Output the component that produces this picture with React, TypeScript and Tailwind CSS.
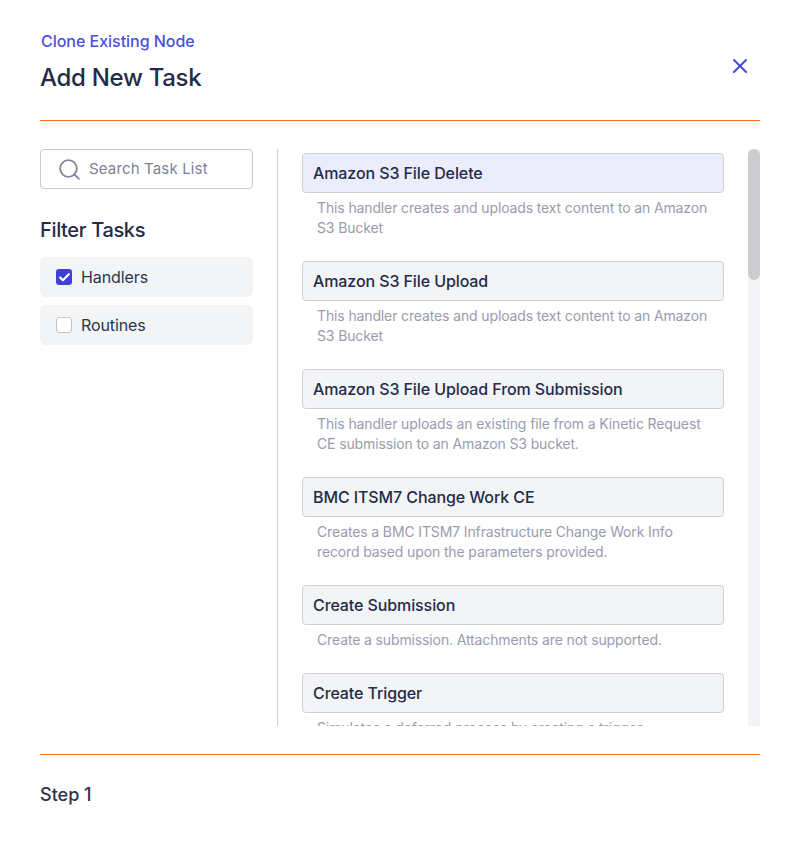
import React, { useState } from 'react';
import { Search, X, Check } from 'lucide-react';

const tasks = [
  { name: 'Amazon S3 File Delete', desc: 'This handler creates and uploads text content to an Amazon S3 Bucket' },
  { name: 'Amazon S3 File Upload', desc: 'This handler creates and uploads text content to an Amazon S3 Bucket' },
  { name: 'Amazon S3 File Upload From Submission', desc: 'This handler uploads an existing file from a Kinetic Request CE submission to an Amazon S3 bucket.' },
  { name: 'BMC ITSM7 Change Work CE', desc: 'Creates a BMC ITSM7 Infrastructure Change Work Info record based upon the parameters provided.' },
  { name: 'Create Submission', desc: 'Create a submission. Attachments are not supported.' },
  { name: 'Create Trigger', desc: 'Simulates a deferred process by creating a trigger.' },
];

const FilterRow = ({ label, checked, onToggle }: { label: string; checked: boolean; onToggle: () => void }) => (
  <label className="flex h-10 items-center gap-[9px] rounded-md bg-[#f3f4f6] px-4 cursor-pointer" onClick={onToggle}>
    <span className={checked
      ? 'flex h-4 w-4 items-center justify-center rounded-[3px] bg-[#3d41d4]'
      : 'flex h-4 w-4 items-center justify-center rounded-[3px] border border-[#c4c4c8] bg-white'}>
      {checked && <Check size={13} strokeWidth={4} className="text-white" />}
    </span>
    <span className="text-base leading-6 tracking-[-0.1px] text-[#2b3550]">{label}</span>
  </label>
);

export default function App() {
  const [handlers, setHandlers] = useState(true);
  const [routines, setRoutines] = useState(false);

  return (
    <div className="h-[845px] w-[800px] overflow-hidden rounded-lg bg-white px-10 font-['Inter',sans-serif]">
      <header className="flex h-[121px] items-start justify-between border-b border-[#f97028]">
        <div>
          <p className="mt-[31px] ml-px text-base font-medium leading-5 tracking-[-0.03px] text-[#4a50dc]">Clone Existing Node</p>
          <h1 className="mt-[11px] text-2xl font-medium leading-8 tracking-[-0.3px] text-[#232b48]">Add New Task</h1>
        </div>
        <button className="mt-[54px] mr-2 text-[#4348d8]">
          <X size={24} strokeWidth={2} />
        </button>
      </header>

      <div className="mt-7 flex h-[577px]">
        <aside className="w-[238px] shrink-0 border-r border-[#cfcfd3] pr-6">
          <div className="flex h-10 w-[213px] items-center gap-[7px] rounded border border-[#c9c9ce] pl-4 pr-[17px]">
            <Search size={25} strokeWidth={1.75} className="text-[#85869a]" />
            <span className="pt-px text-[15px] tracking-[0.15px] text-[#7f8296]">Search Task List</span>
          </div>
          <h2 className="mt-[27px] text-xl font-medium leading-7 tracking-[-0.35px] text-[#232b48]">Filter Tasks</h2>
          <div className="mt-[13px] flex flex-col gap-2">
            <FilterRow label="Handlers" checked={handlers} onToggle={() => setHandlers(!handlers)} />
            <FilterRow label="Routines" checked={routines} onToggle={() => setRoutines(!routines)} />
          </div>
        </aside>

        <div className="ml-6 w-[422px] shrink-0 overflow-hidden pt-1">
          {tasks.map((task, i) => (
            <div key={task.name} className="mb-[23px]">
              <div className={i === 0
                ? 'flex h-10 items-center rounded border border-[#cfcfd6] bg-[#ebedfd] pl-[10px] pr-[11px] text-base font-medium tracking-[-0.1px] text-[#232b48]'
                : 'flex h-10 items-center rounded border border-[#cfcfd6] bg-[#f3f4f6] pl-[10px] pr-[11px] text-base font-medium tracking-[-0.1px] text-[#232b48]'}>
                {task.name}
              </div>
              <p className="mt-[5px] px-[15px] text-sm leading-5 tracking-[-0.13px] text-[#9a9bae]">{task.desc}</p>
            </div>
          ))}
        </div>

        <div className="ml-6 h-full w-3 shrink-0 bg-[#f4f4f6]">
          <div className="h-[131px] rounded-md bg-[#cdcdcf]" />
        </div>
      </div>

      <footer className="mt-7 h-[91px] border-t border-[#f97028] pt-[26px]">
        <p className="text-lg font-medium leading-7 text-[#2b3550]">Step 1</p>
      </footer>
    </div>
  );
}
